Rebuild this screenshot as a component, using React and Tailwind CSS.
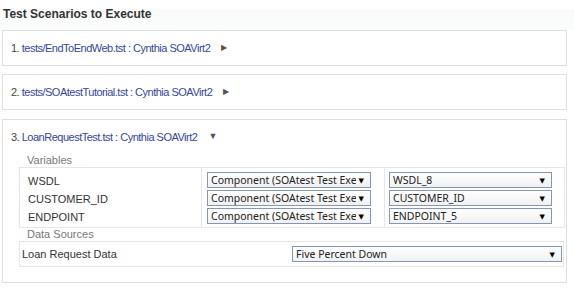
import React from 'react';

const scenarios = [
  { n: '1.', path: 'tests/EndToEndWeb.tst', owner: 'Cynthia SOAVirt2', open: false },
  { n: '2.', path: 'tests/SOAtestTutorial.tst', owner: 'Cynthia SOAVirt2', open: false },
];

const variables = [
  { name: 'WSDL', value: 'WSDL_8' },
  { name: 'CUSTOMER_ID', value: 'CUSTOMER_ID' },
  { name: 'ENDPOINT', value: 'ENDPOINT_5' },
];

function Select({ text, className }) {
  return (
    <div
      className={`flex h-[16px] items-center justify-between border border-[#8595b4] bg-[linear-gradient(to_bottom,#ffffff,#f1f1f1)] pl-[3px] pr-[6px] text-[10.5px] leading-[14px] text-[#222] ${className}`}
      style={{ fontFamily: '"Noto Sans", "DejaVu Sans", sans-serif' }}
    >
      <span className="min-w-0 flex-1 overflow-hidden whitespace-nowrap">{text}</span>
      <span className="ml-[3px] shrink-0 text-[7px] leading-none text-black">▼</span>
    </div>
  );
}

function ScenarioHeader({ n, path, owner, open }) {
  return (
    <div className="flex h-[34px] items-center pl-[8px] text-[11px] tracking-[-0.5px]">
      <span className="text-[#444]">{n}&nbsp;</span>
      <span className="text-[#34469a]">{path} : {owner}</span>
      <span className={`ml-[11px] text-[#555] ${open ? 'text-[9px]' : 'text-[8px]'}`}>{open ? '▼' : '▶'}</span>
    </div>
  );
}

export default function App() {
  return (
    <div
      className="h-[289px] w-[574px] overflow-hidden bg-white"
      style={{ fontFamily: '"Liberation Sans", Arial, sans-serif' }}
    >
      <div className="flex h-[30px] items-start bg-[linear-gradient(to_bottom,#ffffff_9px,#fafbfb_9px)] pl-[3px] pt-[8px]">
        <h1 className="text-[12px] font-bold leading-none text-[#333]">Test Scenarios to Execute</h1>
      </div>

      <div className="ml-[2px] mr-[7px] flex flex-col">
        {scenarios.map((s) => (
          <div key={s.n} className="mb-[8px] border border-[#dedede] bg-white">
            <ScenarioHeader {...s} />
          </div>
        ))}

        <div className="mt-[1px] h-[164px] border border-[#dedede] bg-white">
          <ScenarioHeader n="3." path="LoanRequestTest.tst" owner="Cynthia SOAVirt2" open />

          <div className="pl-[24px] text-[11px] leading-[13px] text-[#777]">Variables</div>
          <div className="ml-[16px] mr-[1px] flex border border-[#e6e6e6]">
            <div className="flex w-[182px] flex-col border-r border-[#e6e6e6] pl-[8px] pt-[4px] pb-[1px]">
              {variables.map((v) => (
                <div key={v.name} className="flex h-[18px] items-center text-[11px] text-[#333]">
                  {v.name}
                </div>
              ))}
            </div>
            <div className="flex w-[183px] flex-col gap-[2px] border-r border-[#e6e6e6] pl-[5px] pt-[4px] pb-[2px]">
              {variables.map((v) => (
                <Select key={v.name} text="Component (SOAtest Test Execution)" className="w-[164px]" />
              ))}
            </div>
            <div className="flex flex-1 flex-col gap-[2px] pl-[4px] pt-[4px] pb-[2px]">
              {variables.map((v) => (
                <Select key={v.name} text={v.value} className="w-[163px]" />
              ))}
            </div>
          </div>

          <div className="pl-[24px] text-[11px] leading-[12px] text-[#777]">Data Sources</div>
          <div className="ml-[16px] mr-[2px] mt-[1px] flex h-[26px] items-center border border-[#e6e6e6]">
            <div className="w-[272px] pl-[2px] text-[11px] text-[#333]">Loan Request Data</div>
            <Select text="Five Percent Down" className="w-[270px]" />
          </div>
        </div>
      </div>
    </div>
  );
}
